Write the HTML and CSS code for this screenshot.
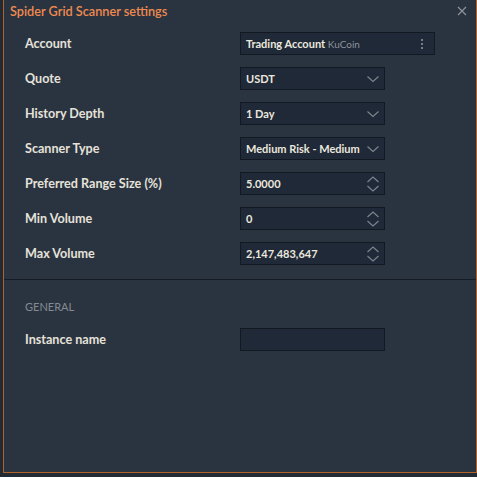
FILE: index.html
```html
<!DOCTYPE html>
<html>
<head>
<meta charset="utf-8">
<link rel="stylesheet" href="styles.css">
</head>
<body>
<div class="backdrop">
  <div class="dialog">
    <div class="header">
      <span class="title">Spider Grid Scanner settings</span>
      <svg class="close" width="10" height="10" viewBox="0 0 10 10"><path d="M1 1L9 9M9 1L1 9" stroke="#8d939b" stroke-width="1.2" fill="none"/></svg>
    </div>
    <div class="section">
      <div class="row">
        <span class="label">Account</span>
        <div class="field wide">
          <span class="value">Trading Account <span class="muted">KuCoin</span></span>
          <svg class="kebab" width="4" height="12" viewBox="0 0 4 12"><circle cx="2" cy="2" r="1.1" fill="#8d939b"/><circle cx="2" cy="6" r="1.1" fill="#8d939b"/><circle cx="2" cy="10" r="1.1" fill="#8d939b"/></svg>
        </div>
      </div>
      <div class="row">
        <span class="label">Quote</span>
        <div class="field"><span class="value">USDT</span><svg class="chev" width="14" height="8" viewBox="0 0 14 8"><path d="M1.5 1.5L7 6.5L12.5 1.5" stroke="#80868e" stroke-width="1.1" fill="none"/></svg></div>
      </div>
      <div class="row">
        <span class="label">History Depth</span>
        <div class="field"><span class="value">1 Day</span><svg class="chev" width="14" height="8" viewBox="0 0 14 8"><path d="M1.5 1.5L7 6.5L12.5 1.5" stroke="#80868e" stroke-width="1.1" fill="none"/></svg></div>
      </div>
      <div class="row">
        <span class="label">Scanner Type</span>
        <div class="field"><span class="value clip">Medium Risk - Medium</span><svg class="chev" width="14" height="8" viewBox="0 0 14 8"><path d="M1.5 1.5L7 6.5L12.5 1.5" stroke="#80868e" stroke-width="1.1" fill="none"/></svg></div>
      </div>
      <div class="row">
        <span class="label">Preferred Range Size (%)</span>
        <div class="field"><span class="value">5.0000</span><svg class="spin" width="14" height="18" viewBox="0 0 14 18"><path d="M1.5 7L7 2L12.5 7M1.5 11L7 16L12.5 11" stroke="#80868e" stroke-width="1.1" fill="none"/></svg></div>
      </div>
      <div class="row">
        <span class="label">Min Volume</span>
        <div class="field"><span class="value">0</span><svg class="spin" width="14" height="18" viewBox="0 0 14 18"><path d="M1.5 7L7 2L12.5 7M1.5 11L7 16L12.5 11" stroke="#80868e" stroke-width="1.1" fill="none"/></svg></div>
      </div>
      <div class="row">
        <span class="label">Max Volume</span>
        <div class="field"><span class="value">2,147,483,647</span><svg class="spin" width="14" height="18" viewBox="0 0 14 18"><path d="M1.5 7L7 2L12.5 7M1.5 11L7 16L12.5 11" stroke="#80868e" stroke-width="1.1" fill="none"/></svg></div>
      </div>
    </div>
    <div class="general">
      <div class="group-title">GENERAL</div>
      <div class="row">
        <span class="label">Instance name</span>
        <div class="field"></div>
      </div>
    </div>
  </div>
</div>
</body>
</html>
```
FILE: styles.css
```css
html, body {
  margin: 0;
  padding: 0;
  background: #222a34;
  font-family: "Lato", "Noto Sans", sans-serif;
}
.backdrop {
  width: 477px;
  height: 477px;
  padding-left: 3px;
  box-sizing: border-box;
}
.dialog {
  width: 474px;
  height: 473px;
  box-sizing: border-box;
  background: #2a3441;
  border-left: 1px solid #b0622b;
  border-right: 1px solid #b0622b;
  border-bottom: 1px solid #b0622b;
  display: flex;
  flex-direction: column;
}
.header {
  height: 26px;
  box-sizing: border-box;
  padding: 4px 9px 0 6px;
  display: flex;
  align-items: flex-start;
  justify-content: space-between;
}
.title {
  color: #f08a4f;
  font-size: 12.7px;
  line-height: 14px;
  font-weight: 600;
}
.close {
  margin-top: 2px;
}
.section {
  padding: 0 0 8px 21px;
  border-bottom: 1px solid #161c25;
}
.row {
  height: 35px;
  display: flex;
  align-items: center;
}
.label {
  width: 215px;
  color: #e6e2da;
  font-size: 12.6px;
  font-weight: 700;
}
.field {
  width: 145px;
  height: 23px;
  box-sizing: border-box;
  background: #1f2937;
  border: 1px solid #131922;
  display: flex;
  align-items: center;
  justify-content: space-between;
  padding: 0 4px 0 5px;
}
.field.wide {
  width: 195px;
  padding-right: 10px;
}
.value {
  color: #ece7de;
  font-size: 11px;
  font-weight: 700;
  white-space: nowrap;
}
.clip {
  overflow: hidden;
}
.muted {
  color: #8d939b;
  font-size: 10px;
  font-weight: 400;
}
.chev, .spin {
  flex: none;
}
.general {
  padding: 20px 0 0 21px;
}
.group-title {
  color: #858a91;
  font-size: 11px;
  line-height: 14px;
  margin-bottom: 8px;
}
```
